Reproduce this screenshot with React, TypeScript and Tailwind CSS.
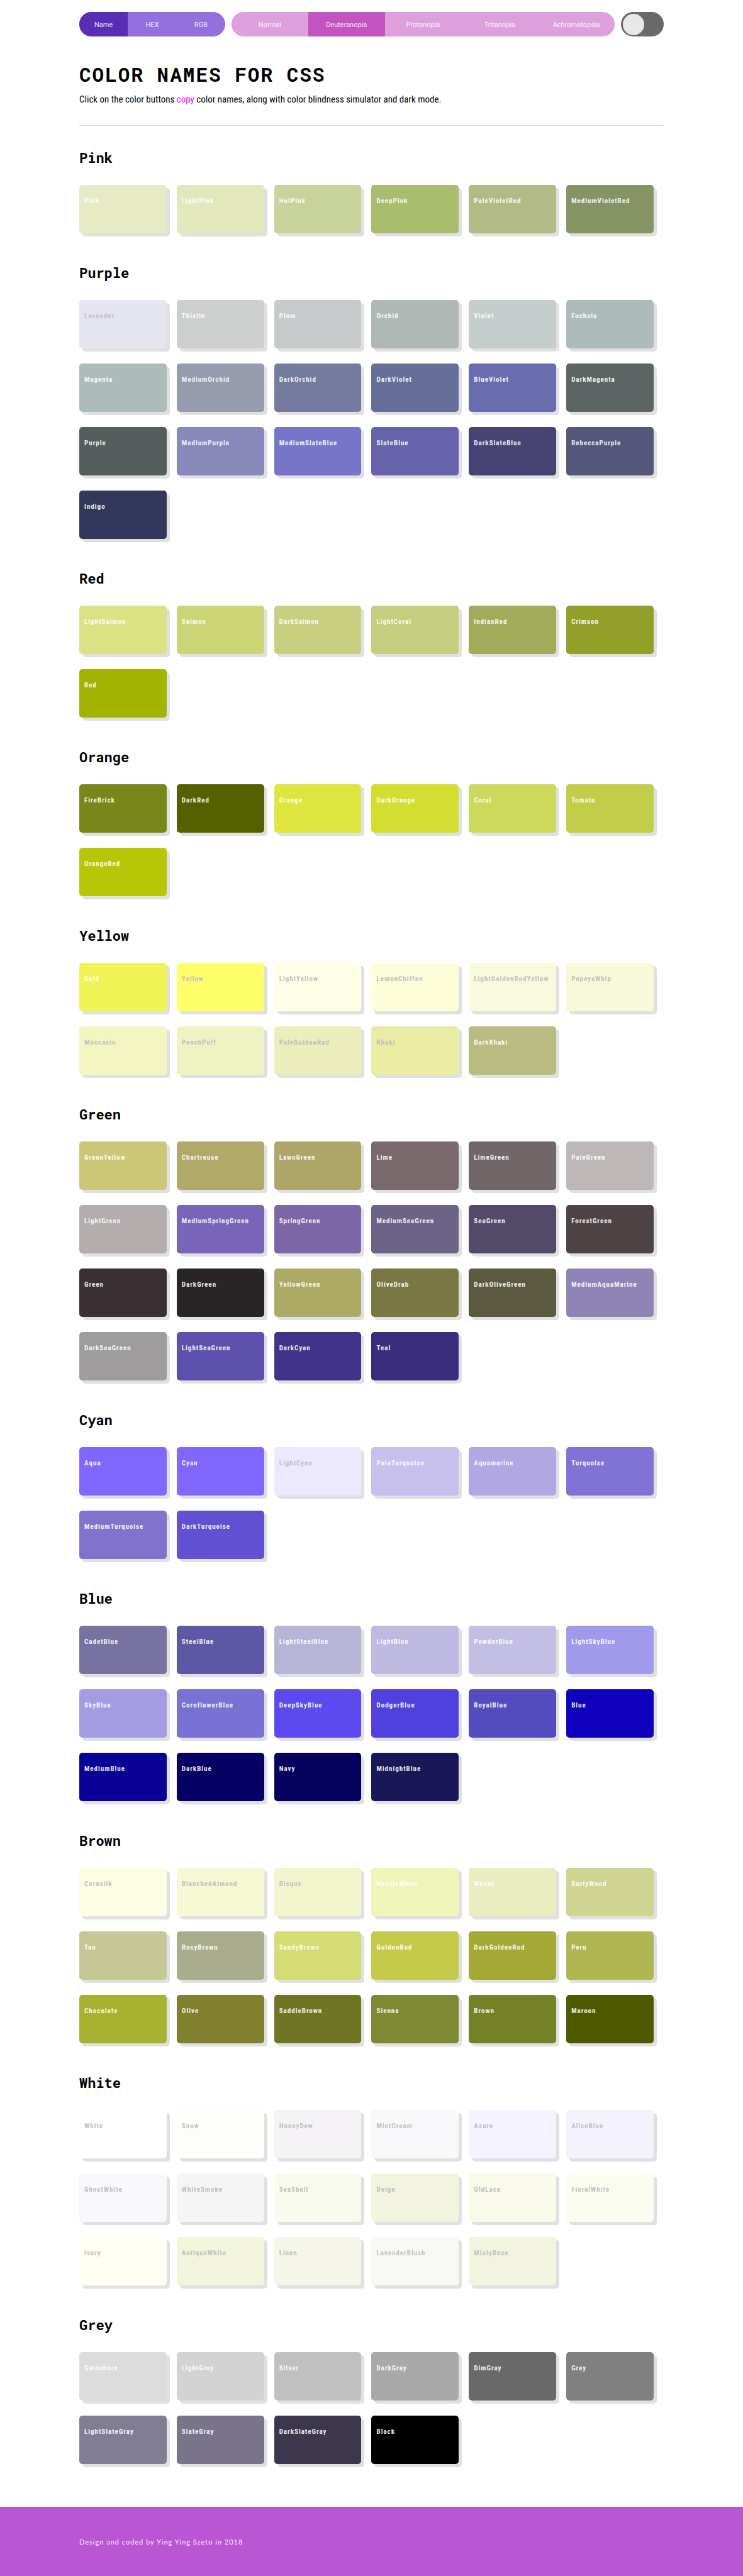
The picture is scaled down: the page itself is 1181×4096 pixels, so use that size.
import { useState } from "react";

type Swatch = { name: string; color: string; muted?: boolean };
type Group = { title: string; swatches: Swatch[] };

const light = (name: string, color: string): Swatch => ({ name, color, muted: true });
const c = (name: string, color: string): Swatch => ({ name, color });

const groups: Group[] = [
  {
    title: "Pink",
    swatches: [
      c("Pink", "#e6eac5"), c("LightPink", "#e2e8bb"), c("HotPink", "#c8d29b"),
      c("DeepPink", "#aabc6d"), c("PaleVioletRed", "#b2ba86"), c("MediumVioletRed", "#869464"),
    ],
  },
  {
    title: "Purple",
    swatches: [
      light("Lavender", "#e5e5f1"), c("Thistle", "#cdcfce"), c("Plum", "#c6caca"),
      c("Orchid", "#b0b8b6"), c("Violet", "#c4cccc"), c("Fuchsia", "#adbcbb"),
      c("Magenta", "#adbcbb"), c("MediumOrchid", "#969bae"), c("DarkOrchid", "#757a9f"),
      c("DarkViolet", "#666f9a"), c("BlueViolet", "#6a6dad"), c("DarkMagenta", "#5c6564"),
      c("Purple", "#545d5c"), c("MediumPurple", "#8888bb"), c("MediumSlateBlue", "#7775c8"),
      c("SlateBlue", "#6763ab"), c("DarkSlateBlue", "#464373"), c("RebeccaPurple", "#54567a"),
      c("Indigo", "#34375c"),
    ],
  },
  {
    title: "Red",
    swatches: [
      c("LightSalmon", "#dbe284"), c("Salmon", "#cbd575"), c("DarkSalmon", "#c8d07f"),
      c("LightCoral", "#c5ce7f"), c("IndianRed", "#a1ab5a"), c("Crimson", "#92a029"),
      c("Red", "#a2b300"),
    ],
  },
  {
    title: "Orange",
    swatches: [
      c("FireBrick", "#79861a"), c("DarkRed", "#556100"), c("Orange", "#dde53e"),
      c("DarkOrange", "#d3de31"), c("Coral", "#cdd95c"), c("Tomato", "#c2ce4a"),
      c("OrangeRed", "#b7c707"),
    ],
  },
  {
    title: "Yellow",
    swatches: [
      c("Gold", "#eff355"), light("Yellow", "#ffff69"), light("LightYellow", "#ffffe8"),
      light("LemonChiffon", "#fdfed8"), light("LightGoldenRodYellow", "#f9f9de"), light("PapayaWhip", "#f8f9da"),
      light("Moccasin", "#f3f6c1"), light("PeachPuff", "#eff3c1"), light("PaleGoldenRod", "#ebedba"),
      light("Khaki", "#eaeca4"), c("DarkKhaki", "#b9bb80"),
    ],
  },
  {
    title: "Green",
    swatches: [
      c("GreenYellow", "#cbc777"), c("Chartreuse", "#b0a968"), c("LawnGreen", "#aea569"),
      c("Lime", "#7a696c"), c("LimeGreen", "#716668"), c("PaleGreen", "#bdb7b7"),
      c("LightGreen", "#b3adad"), c("MediumSpringGreen", "#7864b9"), c("SpringGreen", "#7d66a8"),
      c("MediumSeaGreen", "#6d6287"), c("SeaGreen", "#534a69"), c("ForestGreen", "#4d4344"),
      c("Green", "#3a2f32"), c("DarkGreen", "#292426"), c("YellowGreen", "#adaa65"),
      c("OliveDrab", "#797845"), c("DarkOliveGreen", "#5b5a40"), c("MediumAquaMarine", "#8f84b5"),
      c("DarkSeaGreen", "#9e9c9d"), c("LightSeaGreen", "#5d50ac"), c("DarkCyan", "#41338a"),
      c("Teal", "#3a2d7e"),
    ],
  },
  {
    title: "Cyan",
    swatches: [
      c("Aqua", "#7f67ff"), c("Cyan", "#7f67ff"), light("LightCyan", "#ebe8ff"),
      c("PaleTurquoise", "#c7c0ed"), c("Aquamarine", "#b1a7e2"), c("Turquoise", "#8172d6"),
      c("MediumTurquoise", "#8072cd"), c("DarkTurquoise", "#6150d1"),
    ],
  },
  {
    title: "Blue",
    swatches: [
      c("CadetBlue", "#7872a1"), c("SteelBlue", "#5e57a5"), c("LightSteelBlue", "#b6b4d7"),
      c("LightBlue", "#beb9e1"), c("PowderBlue", "#c2bee4"), c("LightSkyBlue", "#a19aec"),
      c("SkyBlue", "#a39ce1"), c("CornflowerBlue", "#7972d4"), c("DeepSkyBlue", "#5c4aef"),
      c("DodgerBlue", "#5041df"), c("RoyalBlue", "#534bbe"), c("Blue", "#0f00bd"),
      c("MediumBlue", "#0a0096"), c("DarkBlue", "#060064"), c("Navy", "#05005b"),
      c("MidnightBlue", "#1a1758"),
    ],
  },
  {
    title: "Brown",
    swatches: [
      light("Cornsilk", "#fcfde3"), light("BlanchedAlmond", "#f6f8d4"), light("Bisque", "#f3f6cd"),
      c("NavajoWhite", "#eff4b9"), c("Wheat", "#eaedc0"), c("BurlyWood", "#cfd493"),
      c("Tan", "#c5c896"), c("RosyBrown", "#a9ad8e"), c("SandyBrown", "#d4dc73"),
      c("GoldenRod", "#c5cb49"), c("DarkGoldenRod", "#a3a934"), c("Peru", "#b0b752"),
      c("Chocolate", "#a9b230"), c("Olive", "#80802f"), c("SaddleBrown", "#707524"),
      c("Sienna", "#7f8934"), c("Brown", "#758126"), c("Maroon", "#4e5900"),
    ],
  },
  {
    title: "White",
    swatches: [
      light("White", "#ffffff"), light("Snow", "#fdfef9"), light("HoneyDew", "#f5f3f5"),
      light("MintCream", "#f8f8fb"), light("Azure", "#f4f3ff"), light("AliceBlue", "#f3f2fd"),
      light("GhostWhite", "#f8f8fd"), light("WhiteSmoke", "#f5f5f5"), light("SeaShell", "#fafbef"),
      light("Beige", "#f3f4e0"), light("OldLace", "#f9faea"), light("FloralWhite", "#fcfdf1"),
      light("Ivory", "#fffff3"), light("AntiqueWhite", "#f2f4dc"), light("Linen", "#f5f6e9"),
      light("LavenderBlush", "#f8f9f4"), light("MistyRose", "#f2f4df"),
    ],
  },
  {
    title: "Grey",
    swatches: [
      c("Gainsboro", "#dcdcdc"), c("LightGray", "#d3d3d3"), c("Silver", "#c0c0c0"),
      c("DarkGray", "#a9a9a9"), c("DimGray", "#696969"), c("Gray", "#808080"),
      c("LightSlateGray", "#807d94"), c("SlateGray", "#79748b"), c("DarkSlateGray", "#3c374d"),
      c("Black", "#000000"),
    ],
  },
];

const formats = ["Name", "HEX", "RGB"];
const visions = ["Normal", "Deuteranopia", "Protanopia", "Tritanopia", "Achromatopsia"];

function Segments({
  label, options, value, onChange, base, active,
}: {
  label: string;
  options: string[];
  value: string;
  onChange: (v: string) => void;
  base: string;
  active: string;
}) {
  return (
    <div role="group" aria-label={label} className={`flex h-full overflow-hidden rounded-full ${base}`}>
      {options.map((o) => (
        <button
          key={o}
          type="button"
          aria-pressed={o === value}
          onClick={() => onChange(o)}
          className={`min-w-0 flex-1 pt-[2px] text-center text-[11px] leading-[16px] text-white/85 ${o === value ? active : ""}`}
        >
          {o}
        </button>
      ))}
    </div>
  );
}

export default function App() {
  const [format, setFormat] = useState("Name");
  const [vision, setVision] = useState("Deuteranopia");
  const [dark, setDark] = useState(false);

  return (
    <div className={`font-['Roboto_Condensed',Roboto,sans-serif] ${dark ? "bg-[#222222] text-white" : "bg-white text-black"}`}>
      <div className="mx-auto max-w-[929px] pt-[19px]">
        <nav className="grid h-[39px] grid-cols-[232fr_609fr_68fr] gap-[10px] font-[Roboto,sans-serif]">
          <Segments label="Color format" options={formats} value={format} onChange={setFormat} base="bg-[#9370db]" active="bg-[#5a2db5]" />
          <Segments label="Color vision" options={visions} value={vision} onChange={setVision} base="bg-[#dda0dd]" active="bg-[#c154c1]" />
          <button
            type="button"
            role="switch"
            aria-checked={dark}
            aria-label="Dark mode"
            onClick={() => setDark(!dark)}
            className={`flex items-center rounded-full bg-[#696969] px-[3px] ${dark ? "justify-end" : "justify-start"}`}
          >
            <span className="size-[34px] rounded-full bg-[#e8e8e8]" />
          </button>
        </nav>

        <header className="mb-[39px] border-b border-[#dcdcdc] pt-[40px] pb-[31px]">
          <h1 className="font-['Roboto_Mono','DejaVu_Sans_Mono',monospace] text-[31px] leading-[40px] font-bold tracking-[2px]">
            COLOR NAMES FOR CSS
          </h1>
          <p className="mt-[10px] text-[15px] leading-[20px]">
            Click on the color buttons <span className="text-[#ff00ff]">copy</span> color names, along with color
            blindness simulator and dark mode.
          </p>
        </header>

        <main className="flex flex-col gap-[51px]">
          {groups.map((g) => (
            <section key={g.title}>
              <h2 className="mb-[31px] font-['Roboto_Mono','DejaVu_Sans_Mono',monospace] text-[22px] leading-[24px] font-bold">
                {g.title}
              </h2>
              <div className="grid grid-cols-6 gap-x-[16px] gap-y-[24px] pr-[16px]">
                {g.swatches.map((s) => (
                  <button
                    key={s.name}
                    type="button"
                    style={{ backgroundColor: s.color }}
                    className={`flex h-[77px] items-start rounded-[5px] px-[8px] pt-[18px] text-left text-[11px] leading-[16px] font-bold tracking-[1px] shadow-[5px_5px_0_#e0e0e0] ${s.muted ? "text-[#c0c0c0]" : "text-white/90"}`}
                  >
                    {s.name}
                  </button>
                ))}
              </div>
            </section>
          ))}
        </main>
      </div>

      <footer className="mt-[68px] bg-[#ba55d3]">
        <p className="mx-auto max-w-[929px] pt-[48px] pb-[46px] font-[Lato,sans-serif] text-[11px] leading-[16px] tracking-[1px] text-white/90">
          Design and coded by Ying Ying Szeto in 2018
        </p>
      </footer>
    </div>
  );
}
